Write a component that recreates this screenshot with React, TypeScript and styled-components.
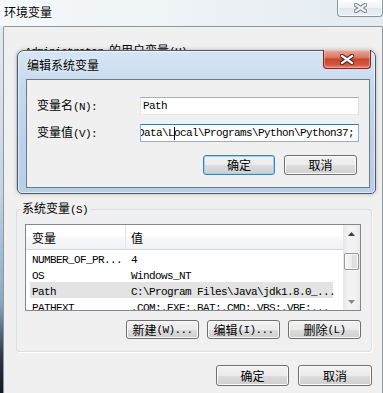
import React from "react";
import styled, { createGlobalStyle, css } from "styled-components";

const Global = createGlobalStyle`
  html, body { margin: 0; padding: 0; background: #f0f0f0; }
  body {
    font-family: "Noto Sans CJK SC", "Liberation Sans", sans-serif;
    font-size: 12px;
    color: #000;
  }
  * { box-sizing: border-box; }
`;

const Screen = styled.div`
  position: relative;
  width: 383px;
  height: 393px;
  overflow: hidden;
  display: flex;
  flex-direction: column;
  background: #f0f0f0;
`;

const TitleBar = styled.div`
  height: 26px;
  flex: none;
  display: flex;
  align-items: flex-start;
  justify-content: space-between;
  background: linear-gradient(90deg, #f5f8fa 0%, #eef3f6 45%, #e4ecf1 100%);
`;

const Title = styled.div`
  padding: 5px 0 0 4px;
  font-size: 12px;
  line-height: 14px;
  text-shadow: 0 0 5px #fff, 0 0 2px #fff;
`;

const WinClose = styled.div`
  width: 46px;
  height: 17px;
  border: 1px solid #8b949b;
  border-top: none;
  border-radius: 0 0 4px 4px;
  background: linear-gradient(#fbfcfd 0%, #eef2f5 50%, #e1e7ec 51%, #eaeff3 100%);
  box-shadow: inset 0 0 0 1px rgba(255, 255, 255, 0.7);
  display: flex;
  align-items: center;
  justify-content: center;
`;

const Body = styled.div`
  flex: 1;
  display: flex;
  min-height: 0;
`;

const SideFrame = styled.div`
  width: 3px;
  flex: none;
  background: linear-gradient(#e2eaf1 0%, #c3d4e4 45%, #8ea8c2 75%, #2a3848 90%, #121a24 100%);
`;

const Client = styled.div`
  flex: 1;
  border: 1px solid #8e969e;
  border-bottom: none;
  border-radius: 2px 2px 0 0;
  background: #f0f0f0;
  padding: 0 10px 0 12px;
  display: flex;
  flex-direction: column;
`;

const Group = styled.fieldset<{ $top: number; $h?: number }>`
  margin: ${(p) => p.$top}px 0 0 0;
  padding: 0 10px 12px 8px;
  min-width: 0;
  ${(p) => p.$h !== undefined && css`height: ${p.$h}px;`}
  border: 1px solid #d5dfe5;
  border-radius: 3px;
  box-shadow: 1px 1px 0 #ffffff;
  display: flex;
  flex-direction: column;
`;

const Legend = styled.legend<{ $shift: number }>`
  margin-left: ${(p) => p.$shift}px;
  padding: 0 2px;
  font-size: 12px;
  line-height: 14px;
  white-space: nowrap;
`;

const M = styled.span`
  font-family: "Liberation Mono", "DejaVu Sans Mono", monospace;
  font-size: 11px;
  letter-spacing: -0.6px;
`;

const List = styled.div`
  margin-top: 7px;
  width: 336px;
  height: 87px;
  flex: none;
  border: 1px solid #828790;
  background: #fff;
  display: flex;
  overflow: hidden;
`;

const ListMain = styled.div`
  flex: 1;
  min-width: 0;
  display: flex;
  flex-direction: column;
`;

const HeaderRow = styled.div`
  height: 25px;
  flex: none;
  display: grid;
  grid-template-columns: 100px 1fr;
  background: linear-gradient(#ffffff 0%, #ffffff 45%, #f7f8f9 50%, #f1f2f4 100%);
  border-bottom: 1px solid #d5d5d5;
`;

const HeaderCell = styled.div<{ $first?: boolean }>`
  display: flex;
  align-items: center;
  padding-left: ${(p) => (p.$first ? 6 : 5)}px;
  font-size: 12px;
  ${(p) => p.$first && css`border-right: 1px solid #e5e5e5;`}
`;

const Row = styled.div<{ $sel?: boolean }>`
  height: 16px;
  flex: none;
  display: grid;
  grid-template-columns: 100px 1fr;
  line-height: 16px;
  white-space: nowrap;
  ${(p) =>
    p.$sel &&
    css`
      background: linear-gradient(90deg, #fff 0px, #fff 4px, #e3e3e3 4px, #e3e3e3 307px, #fff 307px);
    `}
`;

const Cell = styled.div<{ $first?: boolean }>`
  padding-left: ${(p) => (p.$first ? 6 : 5)}px;
  overflow: hidden;
`;

const ScrollBar = styled.div`
  width: 17px;
  flex: none;
  display: flex;
  flex-direction: column;
  background: linear-gradient(90deg, #e6e6e6 0%, #f2f2f2 30%, #f2f2f2 70%, #e9e9e9 100%);
`;

const ScrollArrow = styled.div<{ $bottom?: boolean }>`
  height: 17px;
  flex: none;
  display: flex;
  align-items: center;
  justify-content: center;
  ${(p) => p.$bottom && css`margin-top: auto;`}
`;

const Thumb = styled.div`
  margin: 11px 1px 0 1px;
  height: 17px;
  flex: none;
  border: 1px solid #979797;
  border-radius: 2px;
  background: linear-gradient(90deg, #f6f6f6 0%, #ececec 50%, #dcdcdc 51%, #e4e4e4 100%);
  box-shadow: inset 0 0 0 1px rgba(255, 255, 255, 0.8);
`;

const ButtonRow = styled.div<{ $top: number; $gap: number; $right?: number }>`
  margin-top: ${(p) => p.$top}px;
  display: flex;
  justify-content: flex-end;
  gap: ${(p) => p.$gap}px;
  padding-right: ${(p) => p.$right ?? 0}px;
  flex: none;
`;

const Button = styled.div<{ $w?: number; $h?: number; $default?: boolean }>`
  width: ${(p) => p.$w ?? 73}px;
  height: ${(p) => p.$h ?? 21}px;
  border: 1px solid ${(p) => (p.$default ? "#3c7fb1" : "#707070")};
  border-radius: 3px;
  background: linear-gradient(#f2f2f2 0%, #ebebeb 50%, #dddddd 51%, #cfcfcf 100%);
  box-shadow: inset 0 0 0 1px ${(p) => (p.$default ? "#9fd3f2" : "#fbfbfb")};
  display: flex;
  align-items: center;
  justify-content: center;
  font-size: 12px;
  line-height: 14px;
  white-space: nowrap;
`;

const Dialog = styled.div`
  position: absolute;
  left: 17px;
  top: 50px;
  width: 359px;
  height: 144px;
  border: 1px solid #4f5a66;
  border-radius: 7px 7px 5px 5px;
  background: linear-gradient(180deg, #d6e5f4 0%, #c6daee 25%, #bcd2ea 60%, #b8cfe8 100%);
  box-shadow: inset 0 0 0 1px rgba(255, 255, 255, 0.55), 0 0 4px rgba(0, 0, 0, 0.25);
  display: flex;
  flex-direction: column;
`;

const DialogTitleRow = styled.div`
  height: 28px;
  flex: none;
  display: flex;
  justify-content: space-between;
  align-items: flex-start;
`;

const DialogTitle = styled.div`
  padding: 7px 0 0 9px;
  font-size: 12px;
  line-height: 14px;
  text-shadow: 0 0 5px rgba(255, 255, 255, 0.9);
`;

const DialogClose = styled.div`
  width: 48px;
  height: 19px;
  margin: -1px 4px 0 0;
  border: 1px solid #6b2b22;
  border-top: none;
  border-radius: 0 0 4px 4px;
  background: linear-gradient(#eaa898 0%, #dc7a66 40%, #c9442d 52%, #d0563e 80%, #dd8a6f 100%);
  box-shadow: inset 0 0 0 1px rgba(255, 220, 210, 0.45);
  display: flex;
  align-items: center;
  justify-content: center;
`;

const DialogClient = styled.div`
  flex: 1;
  margin: 0 5px 5px 8px;
  border: 1px solid #6a7a8b;
  background: #f0f0f0;
  padding: 17px 0 0 10px;
  display: flex;
  flex-direction: column;
`;

const Form = styled.div`
  display: grid;
  grid-template-columns: 103px 219px;
  grid-auto-rows: 18px;
  row-gap: 9px;
  align-items: center;
`;

const FieldLabel = styled.div`
  font-size: 12px;
  line-height: 14px;
  white-space: nowrap;
`;

const TextBox = styled.div<{ $focus?: boolean }>`
  height: 18px;
  border: 1px solid;
  border-color: #abadb3 #dbdfe6 #e3e9ef #e2e3ea;
  background: #fff;
  overflow: hidden;
  display: flex;
  align-items: center;
  white-space: nowrap;
  padding: 0 2px;
  ${(p) =>
    p.$focus &&
    css`
      border-color: #3d7bad #7eb4ea #7eb4ea #7eb4ea;
      justify-content: flex-end;
      padding: 0 4px 0 2px;
    `}
`;

const Caret = styled.span`
  display: inline-block;
  width: 1px;
  height: 13px;
  margin-right: -1px;
  background: #000;
  vertical-align: middle;
`;

function XGlyph({ fill, stroke, w, h }: { fill: string; stroke: string; w: number; h: number }) {
  return (
    <svg width={w} height={h} viewBox={`0 0 ${w} ${h}`}>
      <g strokeLinecap="square">
        <path d={`M2 2 L${w - 2} ${h - 2} M${w - 2} 2 L2 ${h - 2}`} stroke={stroke} strokeWidth={4.4} />
        <path d={`M2 2 L${w - 2} ${h - 2} M${w - 2} 2 L2 ${h - 2}`} stroke={fill} strokeWidth={2.2} />
      </g>
    </svg>
  );
}

function Arrow({ up, color }: { up?: boolean; color: string }) {
  return (
    <svg width="7" height="4" viewBox="0 0 7 4">
      <path d={up ? "M0 4 L3.5 0 L7 4 Z" : "M0 0 L3.5 4 L7 0 Z"} fill={color} />
    </svg>
  );
}

const rows = [
  { name: "NUMBER_OF_PR...", value: "4" },
  { name: "OS", value: "Windows_NT" },
  { name: "Path", value: "C:\\Program Files\\Java\\jdk1.8.0_...", sel: true },
  { name: "PATHEXT", value: ".COM;.EXE;.BAT;.CMD;.VBS;.VBE;..." },
];

export default function App() {
  return (
    <>
      <Global />
      <Screen>
        <TitleBar>
          <Title>环境变量</Title>
          <WinClose>
            <XGlyph w={13} h={10} fill="#eef1f3" stroke="#7b828a" />
          </WinClose>
        </TitleBar>
        <Body>
          <SideFrame />
          <Client>
            <Group $top={16} $h={148}>
              <Legend $shift={-2}>
                <M>Administrator </M>的用户变量<M>(U)</M>
              </Legend>
            </Group>
            <Group $top={10}>
              <Legend $shift={-5}>
                系统变量<M>(S)</M>
              </Legend>
              <List>
                <ListMain>
                  <HeaderRow>
                    <HeaderCell $first>变量</HeaderCell>
                    <HeaderCell>值</HeaderCell>
                  </HeaderRow>
                  {rows.map((r) => (
                    <Row key={r.name} $sel={r.sel}>
                      <Cell $first>
                        <M>{r.name}</M>
                      </Cell>
                      <Cell>
                        <M>{r.value}</M>
                      </Cell>
                    </Row>
                  ))}
                </ListMain>
                <ScrollBar>
                  <ScrollArrow>
                    <Arrow up color="#3c3c3c" />
                  </ScrollArrow>
                  <Thumb />
                  <ScrollArrow $bottom>
                    <Arrow color="#8a8a8a" />
                  </ScrollArrow>
                </ScrollBar>
              </List>
              <ButtonRow $top={9} $gap={8}>
                <Button $h={19}>
                  新建<M>(W)...</M>
                </Button>
                <Button $h={19}>
                  编辑<M>(I)...</M>
                </Button>
                <Button $h={19}>
                  删除<M>(L)</M>
                </Button>
              </ButtonRow>
            </Group>
            <ButtonRow $top={13} $gap={9}>
              <Button $w={73}>确定</Button>
              <Button $w={74}>取消</Button>
            </ButtonRow>
          </Client>
        </Body>

        <Dialog>
          <DialogTitleRow>
            <DialogTitle>编辑系统变量</DialogTitle>
            <DialogClose>
              <XGlyph w={14} h={11} fill="#ffffff" stroke="#4a1c16" />
            </DialogClose>
          </DialogTitleRow>
          <DialogClient>
            <Form>
              <FieldLabel>
                变量名<M>(N):</M>
              </FieldLabel>
              <TextBox>
                <M>Path</M>
              </TextBox>
              <FieldLabel>
                变量值<M>(V):</M>
              </FieldLabel>
              <TextBox $focus>
                <M>
                  Data\L
                  <Caret />
                  ocal\Programs\Python\Python37;
                </M>
              </TextBox>
            </Form>
            <ButtonRow $top={13} $gap={9} $right={12}>
              <Button $w={72} $h={20} $default>
                确定
              </Button>
              <Button $w={73} $h={20}>
                取消
              </Button>
            </ButtonRow>
          </DialogClient>
        </Dialog>
      </Screen>
    </>
  );
}
